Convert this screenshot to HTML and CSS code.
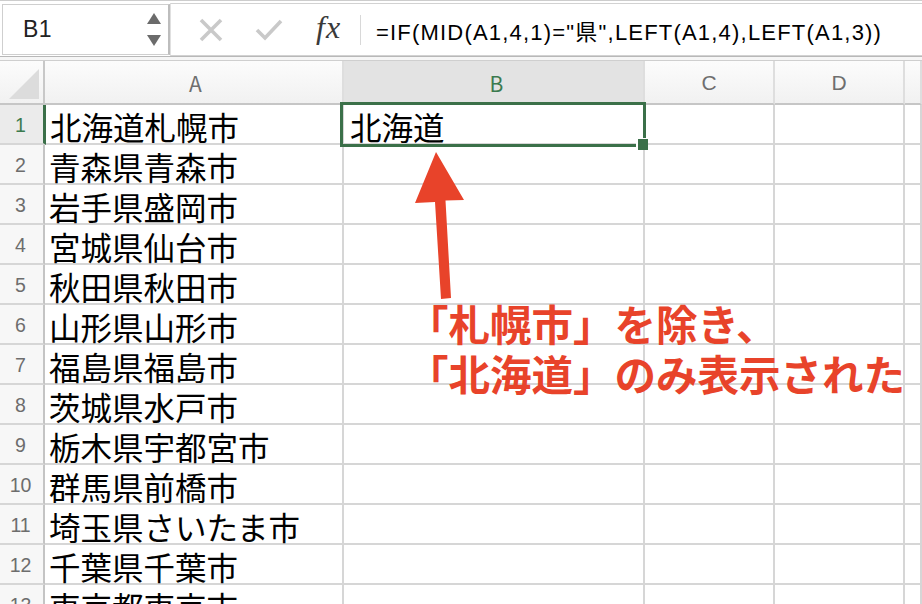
FILE: index.html
```html
<!DOCTYPE html>
<html lang="ja">
<head>
<meta charset="utf-8">
<title>Excel</title>
<link rel="stylesheet" href="styles.css">
</head>
<body>
<div class="app">
  <div class="topbar">
    <div class="namebox">
      <span class="ref">B1</span>
      <svg class="spin" width="16" height="36" viewBox="0 0 16 36">
        <polygon points="8,1 15,12 1,12" fill="#6b6b6b"/>
        <polygon points="1,23 15,23 8,34" fill="#6b6b6b"/>
      </svg>
    </div>
    <div class="fbox">
      <svg class="ico-x" width="24" height="24" viewBox="0 0 24 24">
        <path d="M2 2 L22 22 M22 2 L2 22" stroke="#c9c9c9" stroke-width="3.6" fill="none"/>
      </svg>
      <svg class="ico-ok" width="28" height="24" viewBox="0 0 28 24">
        <path d="M2 12 L10 20 L26 3" stroke="#c9c9c9" stroke-width="3.6" fill="none" stroke-linejoin="miter"/>
      </svg>
      <span class="fx">fx</span>
      <span class="vsep"></span>
      <span class="formula">=IF(MID(A1,4,1)="県",LEFT(A1,4),LEFT(A1,3))</span>
    </div>
  </div>
  <div class="divider"></div>
  <div class="sheet">
    <div class="row hdr">
      <div class="rh corner"><svg width="30" height="30" viewBox="0 0 30 30"><polygon points="0,30 30,30 30,0" fill="#dcdcdc"/></svg></div>
      <div class="ca ch">A</div>
      <div class="cb ch sel">B</div>
      <div class="cc ch">C</div>
      <div class="cd ch">D</div>
      <div class="ce ch"></div>
    </div>
    <div class="row"><div class="rh selrow">1</div><div class="ca">北海道札幌市</div><div class="cb">北海道</div><div class="cc"></div><div class="cd"></div><div class="ce"></div></div>
    <div class="row"><div class="rh">2</div><div class="ca">青森県青森市</div><div class="cb"></div><div class="cc"></div><div class="cd"></div><div class="ce"></div></div>
    <div class="row"><div class="rh">3</div><div class="ca">岩手県盛岡市</div><div class="cb"></div><div class="cc"></div><div class="cd"></div><div class="ce"></div></div>
    <div class="row"><div class="rh">4</div><div class="ca">宮城県仙台市</div><div class="cb"></div><div class="cc"></div><div class="cd"></div><div class="ce"></div></div>
    <div class="row"><div class="rh">5</div><div class="ca">秋田県秋田市</div><div class="cb"></div><div class="cc"></div><div class="cd"></div><div class="ce"></div></div>
    <div class="row"><div class="rh">6</div><div class="ca">山形県山形市</div><div class="cb"></div><div class="cc"></div><div class="cd"></div><div class="ce"></div></div>
    <div class="row"><div class="rh">7</div><div class="ca">福島県福島市</div><div class="cb"></div><div class="cc"></div><div class="cd"></div><div class="ce"></div></div>
    <div class="row"><div class="rh">8</div><div class="ca">茨城県水戸市</div><div class="cb"></div><div class="cc"></div><div class="cd"></div><div class="ce"></div></div>
    <div class="row"><div class="rh">9</div><div class="ca">栃木県宇都宮市</div><div class="cb"></div><div class="cc"></div><div class="cd"></div><div class="ce"></div></div>
    <div class="row"><div class="rh">10</div><div class="ca">群馬県前橋市</div><div class="cb"></div><div class="cc"></div><div class="cd"></div><div class="ce"></div></div>
    <div class="row"><div class="rh">11</div><div class="ca">埼玉県さいたま市</div><div class="cb"></div><div class="cc"></div><div class="cd"></div><div class="ce"></div></div>
    <div class="row"><div class="rh">12</div><div class="ca">千葉県千葉市</div><div class="cb"></div><div class="cc"></div><div class="cd"></div><div class="ce"></div></div>
    <div class="row"><div class="rh">13</div><div class="ca">東京都東京市</div><div class="cb"></div><div class="cc"></div><div class="cd"></div><div class="ce"></div></div>
  </div>

  <div class="selection"></div>
  <div class="handle"></div>
  <svg class="arrow" width="922" height="604" viewBox="0 0 922 604">
    <polygon points="436,152 464,200 445.5,200.5 451,298 441,299 435,202 415,203" fill="#e8432a"/>
  </svg>
  <div class="note">「札幌市」を除き、<br>「北海道」のみ表示された</div>
</div>
</body>
</html>
```
FILE: styles.css
```css
* { box-sizing: border-box; }
html, body { margin: 0; padding: 0; background: #fff; }
body { width: 922px; height: 604px; overflow: hidden; }
.app { position: relative; width: 922px; height: 604px; overflow: hidden; font-family: "Liberation Sans", "Noto Sans CJK JP", sans-serif; }

.topbar { height: 56px; border-top: 1px solid #cdcdcd; display: flex; background: #fff; }
.namebox { width: 168px; margin-left: 2px; margin-top: 3px; height: 51px; border: 1px solid #cfcfcf; border-right: 2px solid #bdbdbd; display: flex; align-items: center; justify-content: space-between; padding-left: 20px; padding-right: 6px; background: #fff; }
.ref { font-size: 23px; color: #222; letter-spacing: 0.5px; }
.spin { display: block; margin-top: 1px; }
.fbox { flex: 1; margin-top: 2px; height: 53px; border: 1px solid #d2d2d2; border-left: 1px solid #e0e0e0; border-right: none; display: flex; align-items: center; padding-left: 28px; background: #fff; }
.ico-x { display: block; }
.ico-ok { display: block; margin-left: 32px; }
.fx { font-family: "Liberation Serif", serif; font-style: italic; font-size: 32px; color: #3a3a3a; margin-left: 33px; width: 28px; letter-spacing: 1px; position: relative; top: -2px; white-space: nowrap; }
.vsep { width: 1px; height: 30px; background: #d8d8d8; margin-left: 16px; flex: none; }
.formula { font-size: 22px; letter-spacing: 1.2px; color: #000; margin-left: 15px; white-space: nowrap; font-family: "Liberation Sans", "Noto Sans CJK JP", sans-serif; }

.divider { height: 5px; border-top: 1px solid #b8b8b8; border-bottom: 1px solid #cfcfcf; background: #f6f6f6; }

.sheet { display: flex; flex-direction: column; }
.row { display: flex; height: 40px; }
.row > div { height: 40px; border-right: 2px solid #d6d6d6; border-bottom: 2px solid #d6d6d6; background: #fff; flex: none; }
.rh { width: 45px; }
.ca { width: 299px; }
.cb { width: 301px; }
.cc { width: 130px; }
.cd { width: 130px; }
.row > .ce { flex: 1; }

.row > .rh { background: #f7f7f7; border-right-color: #c4c4c4; color: #6d6d6d; font-size: 19.5px; display: flex; align-items: center; justify-content: center; padding-top: 2px; padding-right: 2px; }
.row > .rh.selrow { background: #ebebeb; color: #3b7a4e; border-right: 3px solid #3b7049; width: 46px; }
.row > .rh.selrow + .ca { width: 298px; }

.row > .ca, .row > .cb { font-family: "Noto Sans CJK JP", sans-serif; font-size: 31.5px; color: #000; line-height: 38px; padding-left: 4px; white-space: nowrap; overflow: visible; padding-top: 2px; }
.row > .cb { padding-left: 6px; }

.row.hdr { height: 44px; }
.row.hdr > div { height: 44px; background: linear-gradient(#fcfcfc, #f1f1f1); border-right: 2px solid #dedede; border-bottom: 2px solid #c6c6c6; color: #6e6e6e; font-size: 21px; display: flex; align-items: center; justify-content: center; padding-top: 1px; }
.row.hdr > .rh { border-right-color: #c8c8c8; }
.row.hdr > .sel { background: #e3e3e3; color: #3b7a4e; border-bottom-color: #3b7049; }
.corner { align-items: flex-end !important; justify-content: flex-end !important; padding: 0 4px 4px 0 !important; }
.corner svg { display: block; }

.selection { position: absolute; left: 340px; top: 102px; width: 306px; height: 45px; border: 3px solid #3b7049; }
.handle { position: absolute; left: 638px; top: 139px; width: 10px; height: 11px; background: #3b7049; box-shadow: -2px 0 0 #fff, 0 -1px 0 #fff; }
.arrow { position: absolute; left: 0; top: 0; }
.note { position: absolute; left: 407px; top: 298px; font-family: "Noto Sans CJK JP", sans-serif; font-weight: 700; font-size: 41.5px; line-height: 50px; color: #e8432a; white-space: nowrap; }
```
